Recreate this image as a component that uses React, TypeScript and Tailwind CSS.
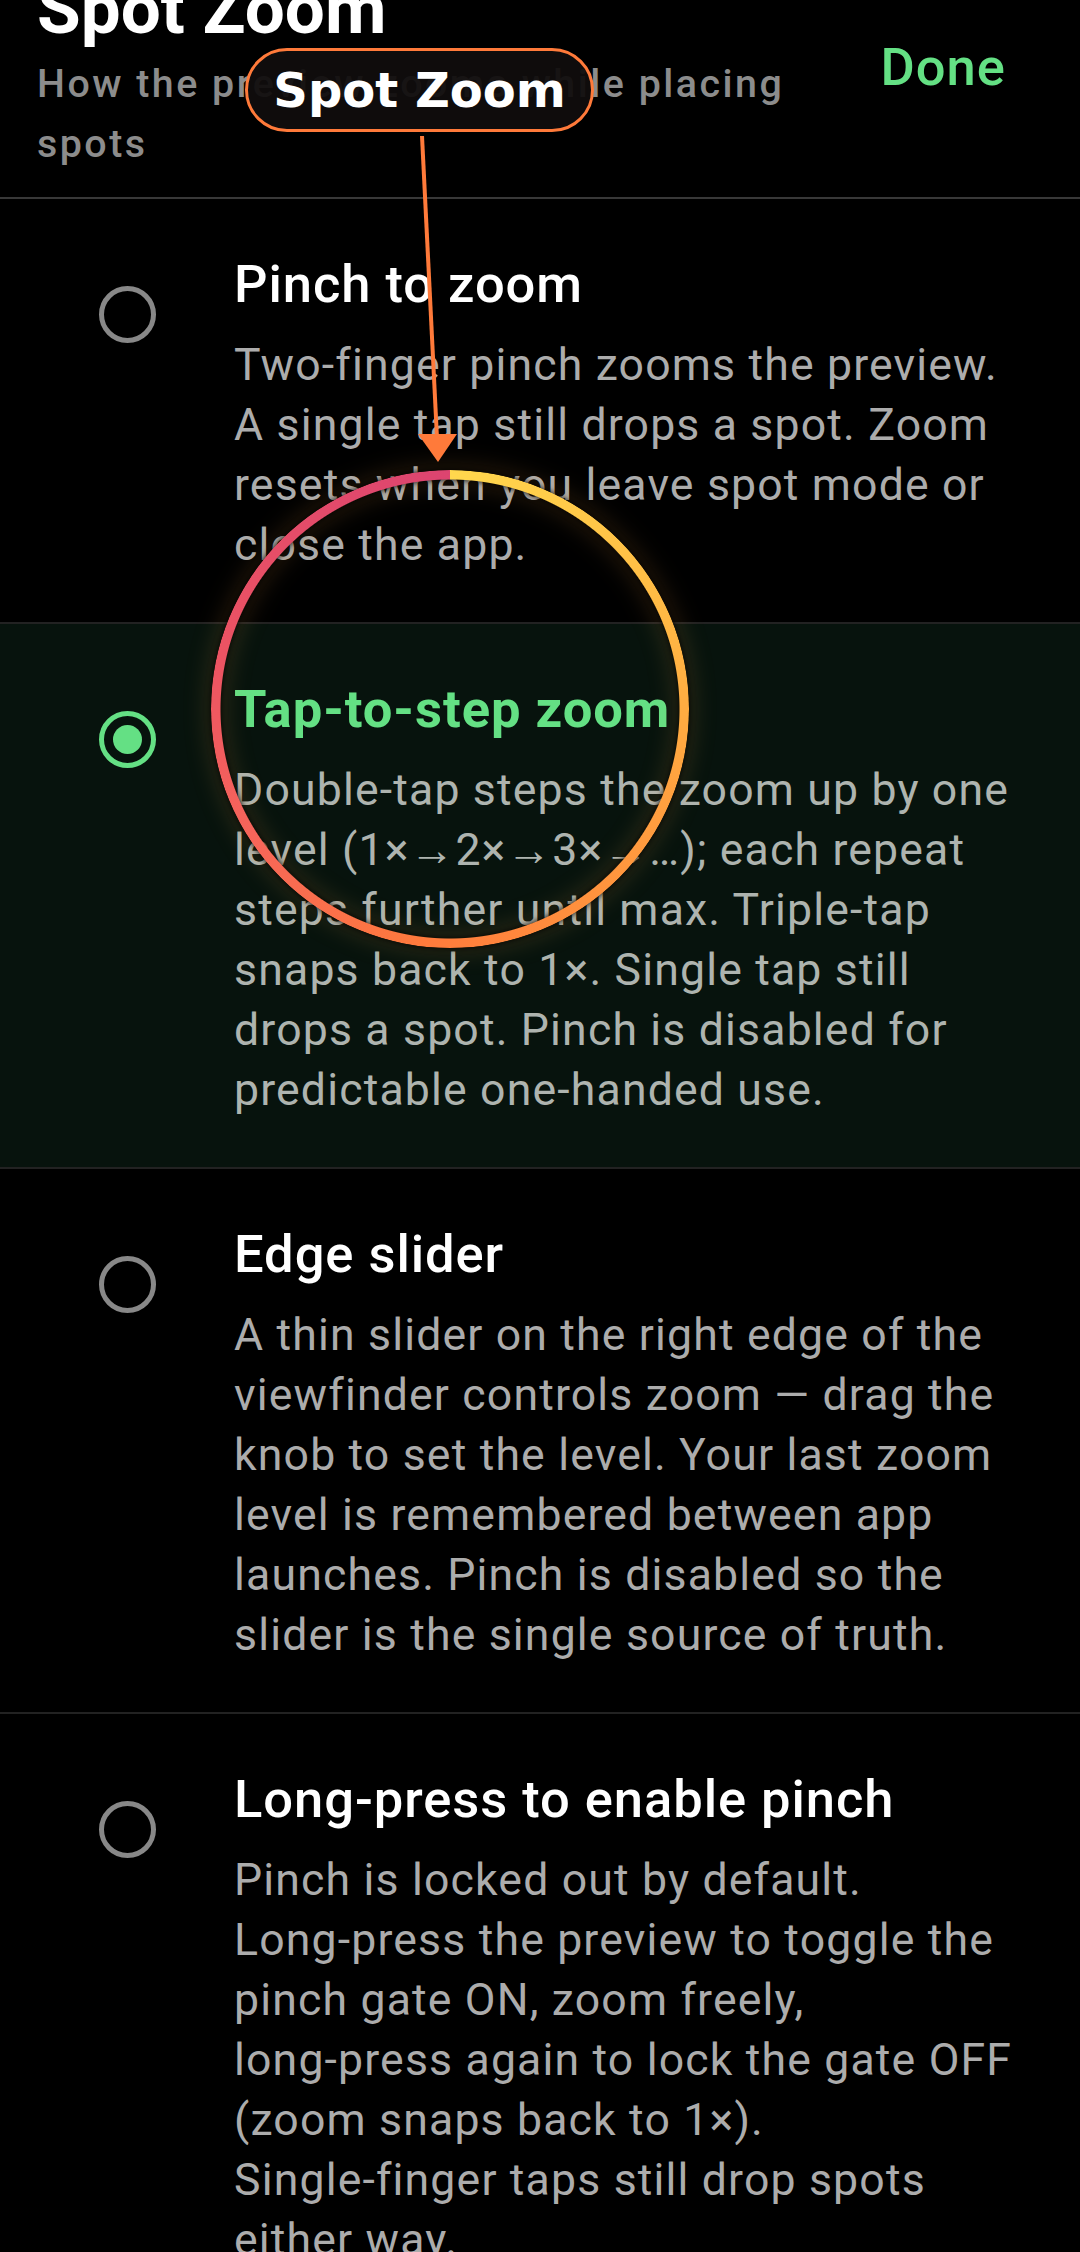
import React from 'react';

// --- Data ---
type ZoomOption = {
  id: string;
  title: string;
  lines: string[];
};

const OPTIONS: ZoomOption[] = [
  {
    id: 'pinch',
    title: 'Pinch to zoom',
    lines: [
      'Two-finger pinch zooms the preview.',
      'A single tap still drops a spot. Zoom',
      'resets when you leave spot mode or',
      'close the app.'
    ]
  },
  {
    id: 'step',
    title: 'Tap-to-step zoom',
    lines: [
      'Double-tap steps the zoom up by one',
      'level (1×→2×→3×→…); each repeat',
      'steps further until max. Triple-tap',
      'snaps back to 1×. Single tap still',
      'drops a spot. Pinch is disabled for',
      'predictable one-handed use.'
    ]
  },
  {
    id: 'slider',
    title: 'Edge slider',
    lines: [
      'A thin slider on the right edge of the',
      'viewfinder controls zoom — drag the',
      'knob to set the level. Your last zoom',
      'level is remembered between app',
      'launches. Pinch is disabled so the',
      'slider is the single source of truth.'
    ]
  },
  {
    id: 'longpress',
    title: 'Long-press to enable pinch',
    lines: [
      'Pinch is locked out by default.',
      'Long-press the preview to toggle the',
      'pinch gate ON, zoom freely,',
      'long-press again to lock the gate OFF',
      '(zoom snaps back to 1×).',
      'Single-finger taps still drop spots',
      'either way.'
    ]
  }
];

const SELECTED = 'step';

const Radio: React.FC<{ checked: boolean }> = ({ checked }) => (
  <div
    className={`mt-[33px] w-[57px] h-[57px] shrink-0 rounded-full border-[5px] flex items-center justify-center ${
      checked ? 'border-[#64e084]' : 'border-[#888888]'
    }`}
  >
    {checked && <div className="w-[29px] h-[29px] rounded-full bg-[#64e084]" />}
  </div>
);

const OptionRow: React.FC<{ option: ZoomOption; checked: boolean }> = ({ option, checked }) => (
  <div className={`flex gap-[78px] pl-[99px] pr-[40px] pt-[54px] pb-[47px] ${checked ? 'bg-[#07130d]' : ''}`}>
    <Radio checked={checked} />
    <div className="flex flex-col">
      <div
        className={`text-[52.5px] leading-[62px] tracking-[0.018em] whitespace-nowrap ${
          checked ? 'font-bold text-[#64e084]' : 'font-medium text-white'
        }`}
      >
        {option.title}
      </div>
      <div
        className={`mt-[20px] text-[44.6px] leading-[60px] tracking-[0.026em] ${
          checked ? 'text-[#aeb4af]' : 'text-[#acacac]'
        }`}
      >
        {option.lines.map((line, i) => (
          <div key={i} className="whitespace-nowrap">{line}</div>
        ))}
      </div>
    </div>
  </div>
);

const App: React.FC = () => {
  return (
    <div className="relative w-[1080px] h-[2252px] overflow-hidden bg-black [font-family:Roboto,'Noto_Sans',sans-serif]">
      {/* Header */}
      <div className="flex items-start pl-[37px] pr-[74px] pb-[23px]">
        <div className="flex-1 flex flex-col">
          <div className="-mt-[31px] text-[71px] leading-[80px] font-bold text-white whitespace-nowrap">Spot Zoom</div>
          <div className="mt-[5px] w-[800px] text-[39.4px] leading-[60px] font-medium tracking-[0.063em] text-[#8c8c8c]">
            How the preview zooms while placing spots
          </div>
        </div>
        <div className="mt-[36px] text-[52.5px] leading-[62px] font-medium tracking-[0.02em] text-[#64e084]">Done</div>
      </div>
      <div className="h-[2px] bg-[#383838]" />

      {/* Options */}
      <div className="flex flex-col">
        {OPTIONS.map((opt, i) => (
          <React.Fragment key={opt.id}>
            {i > 0 && <div className="h-[2px] bg-[#222222]" />}
            <OptionRow option={opt} checked={opt.id === SELECTED} />
          </React.Fragment>
        ))}
      </div>

      {/* Annotation: highlight ring */}
      <div className="absolute left-[211px] top-[470px] [filter:drop-shadow(0_0_3px_#000)_drop-shadow(0_0_12px_rgba(255,170,70,0.25))] pointer-events-none">
        <div className="w-[478px] h-[478px] rounded-full bg-[conic-gradient(#ffd84d_0%,#ffbf46_15%,#ffa640_28%,#ff8e3d_42%,#ff7a3c_52%,#f6655a_66%,#ec5462_78%,#dc4470_100%)] [mask:radial-gradient(farthest-side,transparent_calc(100%_-_10px),#000_calc(100%_-_9px))]" />
      </div>

      {/* Annotation: arrow */}
      <svg className="absolute left-0 top-0 pointer-events-none" width="1080" height="500" viewBox="0 0 1080 500">
        <line x1="422" y1="136" x2="437" y2="438" stroke="#ff7a3a" strokeWidth="4" />
        <polygon points="418,434 457,434 438,462" fill="#ff7a3a" />
      </svg>

      {/* Annotation: label pill */}
      <div className="absolute left-[245px] top-[48px] w-[349px] h-[84px] rounded-full border-[3px] border-[#ff7a3a] bg-[rgba(16,13,13,0.94)] flex items-center justify-center">
        <span className="text-[48px] font-bold text-white leading-none [font-family:'DejaVu_Sans',sans-serif]">Spot Zoom</span>
      </div>
    </div>
  );
};

export default App;
